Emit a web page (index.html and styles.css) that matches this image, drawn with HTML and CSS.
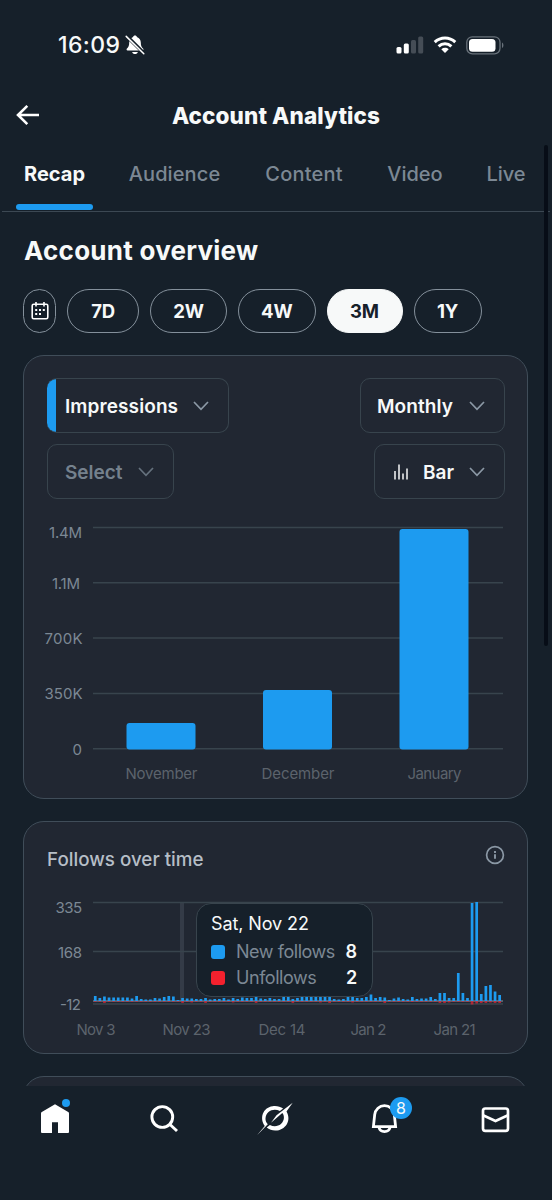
FILE: index.html
```html
<!DOCTYPE html>
<html lang="en">
<head>
    <meta charset="UTF-8">
    <meta name="viewport" content="width=device-width, initial-scale=1.0">
    <title>Account Analytics</title>
    <link rel="stylesheet" href="styles.css">
</head>
<body>
    <div class="phone">
        <!-- Status bar -->
        <div class="status-bar">
            <div class="status-left">
                <span class="clock">16:09</span>
                <svg width="20" height="20" viewBox="0 0 20 20">
                    <path d="M10 .6c-1 0-1.7.6-1.9 1.4C5.500 2.900 4.200 5 4.200 7.600c0 3.500-.8 4.600-2.200 6-.8.800-.5 1.800.6 1.800h14.800c1.100 0 1.400-1 .6-1.800-1.400-1.400-2.200-2.500-2.200-6 0-2.600-1.300-4.700-3.900-5.600C11.700 1.200 11 .6 10 .6zM7.200 16.900c.3 1.300 1.400 2.200 2.800 2.200s2.500-.9 2.800-2.200z" fill="#fff"/>
                    <path d="M2 1.400l17.600 17.400" stroke="#16202a" stroke-width="3.600"/>
                    <path d="M1.200 1.400l17.600 17.400" stroke="#fff" stroke-width="1.500" stroke-linecap="round"/>
                </svg>
            </div>
            <div class="status-right">
                <svg width="28" height="18" viewBox="0 0 28 18">
                    <rect x="0.500" y="11" width="5" height="6.500" rx="1.500" fill="#fff"/>
                    <rect x="7.800" y="7.500" width="5" height="10" rx="1.500" fill="#fff"/>
                    <rect x="15" y="4" width="5" height="13.500" rx="1.500" fill="#454d56"/>
                    <rect x="22.200" y="0.500" width="5" height="17" rx="1.500" fill="#454d56"/>
                </svg>
                <svg width="24" height="18" viewBox="0 0 24 18" fill="none" stroke="#fff" stroke-width="3">
                    <path d="M1.700 6.200c5.900-5.500 14.700-5.500 20.600 0"/>
                    <path d="M5.600 10.300c3.700-3.400 9.100-3.400 12.800 0"/>
                    <path d="M8.300 13.200c2.200-1.900 5.200-1.900 7.400 0L12 17z" fill="#fff" stroke="none"/>
                </svg>
                <svg width="39" height="19" viewBox="0 0 39 19">
                    <rect x="0.800" y="0.800" width="33.200" height="17" rx="5.500" fill="none" stroke="#68717a" stroke-width="1.300"/>
                    <rect x="3" y="3" width="26.500" height="12.700" rx="3.500" fill="#fff"/>
                    <path d="M36 6.500c1.900.8 1.900 4.700 0 5.500z" fill="#68717a"/>
                </svg>
            </div>
        </div>

        <header class="header">
            <svg class="back" width="24" height="22" viewBox="0 0 24 22" fill="none" stroke="#fff" stroke-width="2.600">
                <path d="M11.300 1.800L2 11l9.300 9.200M2 11h21"/>
            </svg>
            <h1>Account Analytics</h1>
        </header>

        <nav class="tabs">
            <a class="tab tab-recap active">Recap</a>
            <a class="tab tab-audience">Audience</a>
            <a class="tab tab-content">Content</a>
            <a class="tab tab-video">Video</a>
            <a class="tab tab-live">Live</a>
        </nav>

        <main>
            <h2>Account overview</h2>
            <div class="ranges">
                <button class="chip chip-calendar">
                    <svg width="18" height="18" viewBox="0 0 18 18" fill="none" stroke="#fff" stroke-width="1.600">
                        <rect x="1.200" y="2.300" width="15.600" height="14.400" rx="1.500"/>
                        <path d="M5 0v4.500M13 0v4.500"/>
                        <path d="M4.200 8h2M8 8h2M11.800 8h2M4.200 12h2M8 12h2" stroke-width="2"/>
                    </svg>
                </button>
                <button class="chip chip-7d">7D</button>
                <button class="chip chip-2w">2W</button>
                <button class="chip chip-4w">4W</button>
                <button class="chip chip-3m selected">3M</button>
                <button class="chip chip-1y">1Y</button>
            </div>

            <section class="card overview">
                <div class="controls">
                    <button class="select select-metric"><span>Impressions</span>
                        <svg class="chevron" width="16" height="10" viewBox="0 0 16 10"><path d="M1 1l7 7.300L15 1"/></svg>
                    </button>
                    <button class="select select-period"><span>Monthly</span>
                        <svg class="chevron" width="16" height="10" viewBox="0 0 16 10"><path d="M1 1l7 7.300L15 1"/></svg>
                    </button>
                </div>
                <div class="controls">
                    <button class="select select-empty"><span>Select</span>
                        <svg class="chevron" width="16" height="10" viewBox="0 0 16 10"><path d="M1 1l7 7.300L15 1"/></svg>
                    </button>
                    <button class="select select-type">
                        <svg class="bar-icon" width="14" height="16" viewBox="0 0 14 16"><path d="M1 7v8.500M5 .5v15M9 9.500v6M13 4.500v11"/></svg>
                        <span>Bar</span>
                        <svg class="chevron" width="16" height="10" viewBox="0 0 16 10"><path d="M1 1l7 7.300L15 1"/></svg>
                    </button>
                </div>
                <svg class="chart" id="impressions-chart" width="504" height="290" viewBox="0 0 504 290"></svg>
            </section>

            <section class="card follows">
                <div class="card-title">
                    <h3>Follows over time</h3>
                    <svg width="20" height="20" viewBox="0 0 20 20" fill="none" stroke="#8b98a5" stroke-width="1.700">
                        <circle cx="10" cy="10" r="8.400"/>
                        <path d="M10 9.300v4.500M10 6v2" stroke-width="1.900"/>
                    </svg>
                </div>
                <svg class="chart" id="follows-chart" width="504" height="150" viewBox="0 0 504 150"></svg>
                <div class="tooltip">
                    <div class="tooltip-date">Sat, Nov 22</div>
                    <div class="tooltip-row"><i class="swatch new"></i><span>New follows</span><b>8</b></div>
                    <div class="tooltip-row"><i class="swatch lost"></i><span>Unfollows</span><b>2</b></div>
                </div>
            </section>

            <section class="card next"></section>
        </main>

        <nav class="bottom-nav">
            <a>
                <svg width="40" height="40" viewBox="0 0 40 40">
                    <path d="M20 6.200l13.200 7.900q.8.500.8 1.400V34q0 1-1 1H23V24.300h-6V35H7q-1 0-1-1V15.500q0-.9.800-1.400z" fill="#fff"/>
                </svg>
                <span class="dot"></span>
            </a>
            <a>
                <svg width="40" height="40" viewBox="0 0 40 40" fill="none" stroke="#fff" stroke-width="2.900">
                    <circle cx="17.300" cy="19" r="10.400"/>
                    <path d="M25 26.500l7 6.500"/>
                </svg>
            </a>
            <a>
                <svg width="40" height="40" viewBox="0 0 40 40">
                    <path d="M9.800 28C4.300 20.500 7.600 9.500 17.600 8.200c4.200-.5 7.700.4 10.500 2.400l-3.200 2.400c-6.100-3.400-14-.1-14.400 7.300-.2 2.700.9 4.500 2.300 5.900L2 37.300z" fill="#fff"/>
                    <path d="M11.700 29.600l3.200-2.500c6.400 3.200 13.500-.4 14-7 .1-2-.4-3.800-1.600-5.100L16 24.800l5.500-7.600L37.700 4.700l-6.200 8.700c5.400 9.200-1.100 18.800-11.000 19.200-3.100.1-6.400-1.100-8.800-3z" fill="#fff"/>
                </svg>
            </a>
            <a>
                <svg width="40" height="40" viewBox="0 0 40 40" fill="none" stroke="#fff" stroke-width="2.800">
                    <path d="M8.400 28.700l1.300-12c.6-5.400 4.700-9 9.800-9s9.200 3.600 9.800 9l1.300 12zM13.800 29c.8 3.300 2.800 4.600 5.700 4.600s4.900-1.300 5.700-4.600"/>
                </svg>
                <span class="badge">8</span>
            </a>
            <a>
                <svg width="40" height="40" viewBox="0 0 40 40" fill="none" stroke="#fff" stroke-width="2.700">
                    <rect x="8" y="10.500" width="25" height="22.300" rx="2.300"/>
                    <path d="M8 17.300l12.500 5.700L33 17.300"/>
                </svg>
            </a>
        </nav>
        <div class="scrollbar"></div>
    </div>

    <script>
        const months = [
            { name: "November", top: 213 },
            { name: "December", top: 180 },
            { name: "January", top: 19 }
        ];
        const yLabels = [["1.4M", 58, 27.500, 33], ["1.1M", 56, 78.500, 28], ["700K", 58.500, 134, 38], ["350K", 58.500, 189, 38], ["0", 58, 244.500, 10]];

        function label(cls, x, y, text, width) {
            return `<text class="${cls}" x="${x}" y="${y}" textLength="${width}">${text}</text>`;
        }

        function drawImpressions() {
            let html = "";
            for (let i = 0; i < 5; i++) {
                const y = 17.500 + i * 55.300;
                html += `<line class="grid" x1="69" x2="479" y1="${y}" y2="${y}"/>`;
            }
            yLabels.forEach(([text, x, y, w]) => html += label("axis-y", x, y, text, w));
            const widths = [72, 73, 54];
            months.forEach((m, i) => {
                const x = 102.500 + i * 136.500;
                html += `<rect x="${x}" y="${m.top}" width="69" height="${239.500 - m.top}" rx="3" fill="#1d9bf0"/>`;
                html += label("axis-x", x + 35, 269, m.name, widths[i]);
            });
            document.getElementById("impressions-chart").innerHTML = html;
        }

        // bar heights in px, one per day from Nov 3
        const gained = [
            5, 3, 4.500, 3.500, 3.500, 3.500, 3.500, 3.500, 2.500, 5, 2, 1.500, 1.500, 3, 2.500, 4, 5, 4.500, 1, 3,
            2.500, 2.500, 2, 2, 3, 1.500, 2, 2, 3, 1.500, 3, 2, 3.500, 3, 3, 5, 2.500, 2, 3, 2,
            2, 4.500, 5, 2, 3, 5, 5, 5, 5, 5, 5, 4, 2, 1.500, 2, 5, 5, 3, 3, 4,
            6.500, 3, 4, 3.500, 1, 2.500, 3.500, 2, 1.500, 4, 2, 2.500, 2.500, 4, 2, 8, 8, 3, 3, 28,
            8, 3, 98, 99, 7, 15, 16, 9.500, 6
        ];
        const lost = { 2: 2, 19: 2, 21: 1.500, 24: 2, 30: 1.500, 35: 2, 43: 2, 49: 1.500, 51: 2, 56: 1.500, 63: 2, 69: 1, 75: 2, 76: 2, 77: 1.500, 82: 3.500, 83: 2.500, 84: 2, 85: 2, 86: 1.500, 87: 2, 88: 2 };
        const pitch = 404.400 / (gained.length - 1);

        function drawFollows() {
            let html = `<rect x="156" y="23" width="4" height="98" fill="#343b47"/>`;
            [22.500, 71.500, 124].forEach(y => html += `<line class="grid" x1="69" x2="479" y1="${y}" y2="${y}"/>`);
            html += `<line x1="69" x2="479" y1="121" y2="121" stroke="#8b98a5" stroke-width="1"/>`;
            gained.forEach((h, i) => {
                const x = 69.900 + i * pitch;
                html += `<rect x="${x}" y="${121 - h}" width="2.700" height="${h}" fill="#1d9bf0"/>`;
                html += `<rect x="${x}" y="121" width="2.700" height="${lost[i] || 0.800}" fill="#e32638" opacity="0.700"/>`;
            });
            [["335", 58, 33, 26.500], ["168", 58, 77.500, 24], ["-12", 57, 130, 21]].forEach(([t, x, y, w]) => html += label("axis-y", x, y, t, w));
            [["Nov 3", 72, 39], ["Nov 23", 162.500, 48], ["Dec 14", 258, 47], ["Jan 2", 344.500, 36], ["Jan 21", 430.500, 42]].forEach(([t, x, w]) => html += label("axis-x", x, 154.500, t, w));
            document.getElementById("follows-chart").innerHTML = html;
        }

        drawImpressions();
        drawFollows();
    </script>
</body>
</html>
```
FILE: styles.css
```css
* {
    box-sizing: border-box;
}
body {
    margin: 0;
    background-color: #16202a;
    color: #f7f9f9;
    font-family: Inter, "Liberation Sans", sans-serif;
}
h1, h2, h3 {
    margin: 0;
}
button {
    font-family: inherit;
    color: inherit;
    background: none;
    padding: 0;
}
.phone {
    position: relative;
    width: 552px;
    height: 1200px;
    overflow: hidden;
    display: flex;
    flex-direction: column;
}
.status-bar {
    height: 90px;
    flex: none;
    display: flex;
    justify-content: space-between;
    padding: 0 47.5px 0 58px;
    align-items: center;
}
.status-left, .status-right {
    display: flex;
    align-items: center;
}
.status-left {
    gap: 5px;
}
.status-right {
    gap: 9px;
}
.clock {
    font-size: 23px;
    font-weight: 500;
    letter-spacing: 0.4px;
}
.header {
    height: 50px;
    flex: none;
    position: relative;
    display: flex;
    align-items: center;
    justify-content: center;
}
.back {
    position: absolute;
    left: 15.5px;
    top: 14px;
}
h1 {
    font-size: 22.5px;
    font-weight: 800;
    letter-spacing: 0.1px;
}
.tabs {
    height: 72px;
    flex: none;
    margin: 0 2px;
    padding-left: 14px;
    border-bottom: 1.5px solid #3c4853;
    display: flex;
}
.tab {
    position: relative;
    height: 69px;
    line-height: 69px;
    text-align: center;
    font-size: 20px;
    font-weight: 500;
    color: #7c8894;
    white-space: nowrap;
    flex: none;
}
.tab-recap { width: 77px; }
.tab-audience {
    width: 92px;
    margin-left: 35.5px;
    letter-spacing: 0.1px;
}
.tab-content {
    width: 80px;
    margin-left: 43.5px;
    letter-spacing: 0.2px;
}
.tab-video { width: 56px; margin-left: 43px; }
.tab-live { width: 40px; margin-left: 43px; }
.tab.active {
    color: #f7f9f9;
    font-weight: 700;
}
.tab.active::after {
    content: "";
    position: absolute;
    left: 0;
    right: 0;
    bottom: -1px;
    height: 6px;
    border-radius: 3px;
    background-color: #1d9bf0;
}
main {
    height: 874px;
    flex: none;
    overflow: hidden;
    padding: 0 24px 0 23px;
}
h2 {
    height: 77px;
    line-height: 78px;
    padding-left: 1px;
    font-size: 26px;
    font-weight: 700;
    letter-spacing: 0.25px;
}
.ranges {
    display: flex;
    gap: 11px;
    height: 44px;
}
.chip {
    height: 44px;
    border: 1.5px solid #84909b;
    border-radius: 22px;
    font-size: 18.5px;
    font-weight: 700;
    letter-spacing: -0.2px;
}
.chip-calendar {
    width: 33px;
    display: flex;
    align-items: center;
    justify-content: center;
}
.chip-7d { width: 72px; }
.chip-2w { width: 77px; }
.chip-4w { width: 77.5px; }
.chip-3m { width: 76px; }
.chip-1y { width: 68px; }
.chip.selected {
    background-color: #f7f9f9;
    border-color: #f7f9f9;
    color: #16202a;
}
.card {
    position: relative;
    border: 1.5px solid #404d59;
    border-radius: 21px;
    background-color: #212732;
}
.overview {
    margin-top: 22px;
    height: 444px;
    padding: 22px 22px 0 23px;
}
.controls {
    display: flex;
    justify-content: space-between;
    margin-bottom: 11px;
}
.select {
    height: 55px;
    display: flex;
    align-items: center;
    justify-content: space-between;
    border: 1.5px solid #38444d;
    border-radius: 10px;
    padding: 1px 19px 0 17px;
    font-size: 19px;
    font-weight: 600;
    overflow: hidden;
}
.select-metric {
    width: 182px;
    border-left: 0;
    background: linear-gradient(to right, #1d9bf0 9px, transparent 9px);
    padding-left: 18px;
    letter-spacing: 0.1px;
}
.select-period {
    width: 145px;
    padding-left: 16px;
    letter-spacing: 0.1px;
}
.select-empty {
    width: 127px;
    color: #75818d;
}
.select-type {
    width: 131px;
    padding-left: 19px;
}
.chevron {
    fill: none;
    stroke: #8b98a5;
    stroke-width: 1.7;
}
.select-empty .chevron {
    stroke: #65717d;
}
.bar-icon {
    fill: none;
    stroke: #f7f9f9;
    stroke-width: 1.5;
}
.chart {
    display: block;
    margin-left: -23px;
    overflow: visible;
}
.grid {
    stroke: #38444d;
    stroke-width: 1.5;
}
.axis-y, .axis-x {
    font-size: 15px;
}
.axis-y {
    text-anchor: end;
    fill: #7c8894;
}
.axis-x {
    text-anchor: middle;
    fill: #5c636c;
}
.follows {
    margin-top: 22px;
    height: 233px;
    padding: 0 22px 0 23px;
}
.card-title {
    height: 58px;
    display: flex;
    justify-content: space-between;
    padding-top: 23px;
}
h3 {
    font-size: 18.8px;
    line-height: 30px;
    font-weight: 500;
    color: #b6bec7;
}
.tooltip {
    position: absolute;
    left: 172px;
    top: 81px;
    width: 177px;
    height: 94px;
    border: 1.5px solid #38444d;
    border-radius: 15px;
    background-color: #16202a;
    padding: 7px 15px 0 14px;
    font-size: 18px;
    line-height: 26px;
    letter-spacing: -0.1px;
}
.tooltip-date {
    height: 28px;
}
.tooltip-row {
    display: flex;
    align-items: center;
    height: 26px;
    color: #7c8894;
}
.tooltip-row span {
    letter-spacing: -0.45px;
}
.swatch {
    width: 14px;
    height: 14px;
    border-radius: 3px;
    margin-right: 11px;
}
.swatch.new { background-color: #1d9bf0; }
.swatch.lost { background-color: #f4212e; }
.tooltip-row b {
    margin-left: auto;
    font-weight: 600;
    color: #f7f9f9;
}
.next {
    margin-top: 22px;
    height: 60px;
}
.bottom-nav {
    height: 114px;
    flex: none;
    display: flex;
    padding: 12px 2px 0 0;
    background-color: #16202a;
}
.bottom-nav a {
    width: 110px;
    position: relative;
    display: flex;
    justify-content: center;
}
.dot {
    position: absolute;
    left: 62px;
    top: 1px;
    width: 8px;
    height: 8px;
    border-radius: 50%;
    background-color: #1d9bf0;
}
.badge {
    position: absolute;
    left: 60px;
    top: -1px;
    width: 22px;
    height: 22px;
    border-radius: 50%;
    background-color: #1d9bf0;
    font-size: 16px;
    line-height: 22px;
    text-align: center;
}
.scrollbar {
    position: absolute;
    left: 544px;
    top: 145px;
    width: 4px;
    height: 501px;
    border-radius: 2px;
    background-color: #070d17;
}
```
